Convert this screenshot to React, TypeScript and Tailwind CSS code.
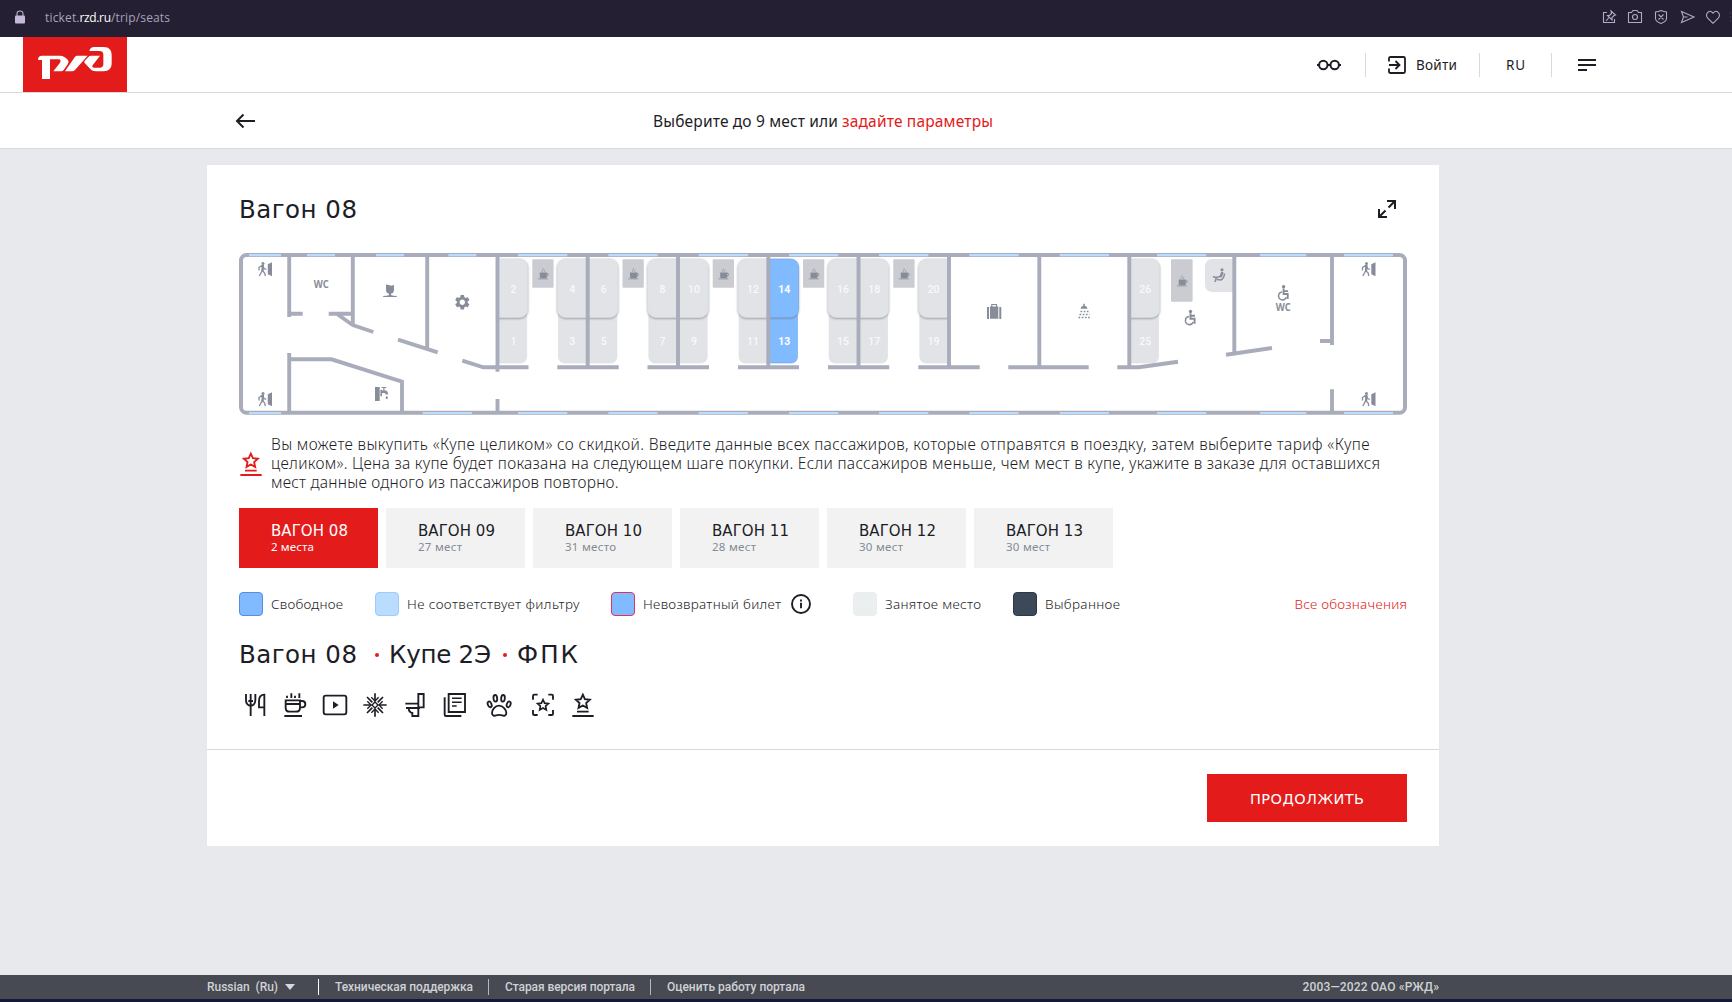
import React, { useLayoutEffect, useRef, useState } from "react";

const sans = "font-['Noto_Sans',sans-serif]";
const wide = "font-['DejaVu_Sans',sans-serif]";

/** One line of text whose tracking is adjusted so that it spans `w` pixels. */
function Fit({ w, className = "", children }: { w: number; className?: string; children: string }) {
  const ref = useRef<HTMLSpanElement>(null);
  const [spacing, setSpacing] = useState(0);
  useLayoutEffect(() => {
    const el = ref.current;
    if (!el) return;
    el.style.letterSpacing = "0px";
    const natural = el.getBoundingClientRect().width;
    const next = (w - natural) / Math.max(1, children.length - 1);
    el.style.letterSpacing = `${next}px`;
    setSpacing(next);
  }, [w, children]);
  return (
    <span ref={ref} className={`inline-block shrink-0 whitespace-pre ${className}`} style={{ letterSpacing: spacing, marginRight: -spacing }}>
      {children}
    </span>
  );
}

function star(cx: number, cy: number, r: number) {
  const pts: string[] = [];
  for (let i = 0; i < 10; i++) {
    const rad = i % 2 ? r * 0.48 : r;
    const a = -Math.PI / 2 + (i * Math.PI) / 5;
    pts.push(`${(cx + rad * Math.cos(a)).toFixed(1)} ${(cy + rad * Math.sin(a)).toFixed(1)}`);
  }
  return `M${pts.join("L")}Z`;
}

const stroke = { fill: "none", stroke: "currentColor", strokeWidth: 5.6 } as const;

function StarBase({ className = "" }: { className?: string }) {
  return (
    <svg className={`h-[26px] w-[26px] shrink-0 ${className}`} viewBox="1021 201 78 78" {...stroke}>
      <path d={star(1059.5, 231, 22)} />
      <path d="M1042 260h35M1028 273h64" />
    </svg>
  );
}

function Services() {
  const cls = "h-[26px] w-[26px] shrink-0";
  return (
    <div className="flex items-center gap-[14px] text-[#1d1d26]">
      <svg className={cls} viewBox="36 201 78 78" {...stroke}>
        <path d="M48 207v19q0 14 14 17q14-3 14-17v-19M62 207v66M55 228h14M103 273v-64q-16 0-16 20v18h16" />
      </svg>
      <svg className={cls} viewBox="156 201 78 78" {...stroke}>
        <path d="M167 226h43v22q0 12-12 12h-19q-12 0-12-12zM210 228h6q10 0 10 9.500t-10 9.500h-6M163 273h53M168 237h42M171 212v7M184 205v14M195 212v7M208 205v14" />
      </svg>
      <svg className={cls} viewBox="276 201 78 78" {...stroke}>
        <rect x="281" y="212" width="68" height="56" rx="6" />
        <path d="M309 229l17 11-17 11z" fill="currentColor" stroke="none" />
      </svg>
      <svg className={cls} viewBox="396 201 78 78" {...stroke} strokeWidth="5">
        <path d="M400 240h24M470 240h-24M435 205v24M435 275v-24M411 216l16 16M459 216l-16 16M411 264l16-16M459 264l-16-16" />
        <path d="M412 229l11 11-11 11M458 229l-11 11 11 11M424 217l11 11 11-11M424 263l11-11 11 11" strokeWidth="4" />
        <path d="M435 231l9 9-9 9-9-9z" fill="white" strokeWidth="4" />
      </svg>
      <svg className={cls} viewBox="518 201 78 78" {...stroke}>
        <path d="M567 207h16v40h-16zM528 236h39M530 249h42M538 250q1 12 11 14v9h18v-24" />
      </svg>
      <svg className={cls} viewBox="637 201 78 78" {...stroke}>
        <path d="M657 207h49v54h-49zM645 217v52q0 4 4 4h46" />
        <path d="M667 220h29M667 232h29M667 243h14" strokeWidth="4.500" />
      </svg>
      <svg className="h-[26px] w-[34px] shrink-0" viewBox="756 201 102 78" {...stroke}>
        <ellipse cx="779" cy="238" rx="5.500" ry="9" transform="rotate(-20 779 238)" />
        <ellipse cx="796" cy="220" rx="5.500" ry="10" transform="rotate(-6 796 220)" />
        <ellipse cx="819" cy="220" rx="5.500" ry="10" transform="rotate(6 819 220)" />
        <ellipse cx="836" cy="238" rx="5.500" ry="9" transform="rotate(20 836 238)" />
        <path d="M807 242c-12 0-21 12-21 22c0 9 8 9 12 7q9-3 19 0c4 2 12 2 12-7c0-10-10-22-22-22z" />
      </svg>
      <svg className={cls} viewBox="900 201 78 78" {...stroke}>
        <path d="M909 224v-11q0-4 4-4h10M955 209h10q4 0 4 4v11M969 255v11q0 4-4 4h-10M923 270h-10q-4 0-4-4v-11" />
        <path d={star(939, 241, 17)} strokeWidth="5" />
      </svg>
      <StarBase />
    </div>
  );
}

type Seat = { n: string; x: number; side: "l" | "r"; upper: boolean; free?: boolean };

const seats: Seat[] = [];
const walls = [497.5, 587.7, 678, 768.3, 858.3, 949];
walls.forEach((wx, i) => {
  const base = i * 4;
  if (i < 5) {
    const free = i === 3;
    seats.push({ n: String(base + 1), x: wx, side: "l", upper: false, free });
    seats.push({ n: String(base + 2), x: wx, side: "l", upper: true, free });
  }
  if (i > 0) {
    seats.push({ n: String(base - 1), x: wx, side: "r", upper: false });
    seats.push({ n: String(base), x: wx, side: "r", upper: true });
  }
});
seats.push({ n: "25", x: 1129.3, side: "l", upper: false });
seats.push({ n: "26", x: 1129.3, side: "l", upper: true });

function SeatShape({ s }: { s: Seat }) {
  const w = s.upper ? 30.2 : 29.2;
  const r = s.upper ? 8 : 6;
  const [top, bottom] = s.upper ? [259, 317.4] : [310, 363];
  const dir = s.side === "l" ? 1 : -1;
  const sweep = s.side === "l" ? 1 : 0;
  const edge = s.x + dir * w;
  const d = `M${s.x} ${top}H${edge - dir * r}A${r} ${r} 0 0 ${sweep} ${edge} ${top + r}V${bottom - r}A${r} ${r} 0 0 ${sweep} ${edge - dir * r} ${bottom}H${s.x}Z`;
  return (
    <g>
      <path
        d={d}
        fill={s.free ? "#80bbff" : "#e1e3e7"}
        stroke={s.free ? "#6ca3f5" : "#dcdee2"}
        strokeWidth=".6"
        filter={s.upper ? "url(#drop)" : undefined}
      />
      <text
        x={s.x + dir * 16 - (dir < 0 ? -0.6 : 0)}
        y={s.upper ? 292.6 : 344.6}
        textAnchor="middle"
        fontSize="10.500"
        fontWeight={s.free ? 700 : 500}
        fill={s.free ? "#fff" : "#f8f9fa"}
        fontFamily="Roboto, sans-serif"
      >
        {s.n}
      </text>
    </g>
  );
}

function Exit({ x, y }: { x: number; y: number }) {
  return (
    <g transform={`translate(${x} ${y})`} fill="#868c98">
      <circle cx="5" cy="1.400" r="1.500" />
      <path d="M4.200 3.200L1 5.600V8.500M4.600 3.200L4.300 8.600L1.300 14M4.300 8.600L6.700 11L7.300 14M5 3.800L6 6.500L8.300 7.300" fill="none" stroke="#868c98" strokeWidth="1.300" />
      <path d="M4 3h2l-.3 6H3.400z" />
      <path d="M9.800 2.300l4.200-2v14l-4.200-2z" />
    </g>
  );
}

function Cup({ x, y }: { x: number; y: number }) {
  return (
    <g transform={`translate(${x} ${y})`} fill="#868c98">
      <path d="M-3.300-1.500h7v4.500q0 1.300-1.300 1.300h-4.400q-1.300 0-1.300-1.300z" />
      <path d="M3.500-.8q1.600 0 1.600 1.400t-1.800 1.400" fill="none" stroke="#868c98" />
      <path d="M-5 4.500H4.700v.8H-5z" />
      <path d="M-.5-2.200q-1.300-1 0-1.900t.6-1.500M1.600-2.200q-1-1 .2-2" fill="none" stroke="#868c98" strokeWidth=".7" />
    </g>
  );
}

function Wheelchair({ x, y }: { x: number; y: number }) {
  return (
    <g transform={`translate(${x} ${y})`} fill="none" stroke="#868c98" strokeWidth="1.900">
      <circle cx="5.300" cy="1.500" r="1.700" fill="#868c98" stroke="none" />
      <path d="M5.300 3.300V8.700H9.400V13.800M5.200 5.800H9.800" />
      <path d="M3.900 6.600A4 4 0 1 0 8 12" strokeWidth="1.500" />
    </g>
  );
}

function CarriageMap() {
  const topWindows = [[249, 32], [307, 28], [376, 28], [448.3, 28], [518, 49.3], [608.3, 49.3], [698.7, 49.3], [789, 49.3], [879, 49.3], [969.3, 49.3], [1059.7, 49.3], [1157, 49.3], [1260, 46.3], [1344, 49]];
  const bottomWindows = [[249, 32], [422.7, 49.3], ...topWindows.slice(4)];
  const tables = [532.3, 622.5, 712.7, 803, 893.3];
  return (
    <svg className="block h-[162px] w-[1168px]" viewBox="239 253 1168 162">
      <defs>
        <filter id="drop" x="-20%" y="-10%" width="140%" height="125%">
          <feDropShadow dx="0" dy="1" stdDeviation="0.900" floodColor="#7b8089" floodOpacity=".75" />
        </filter>
      </defs>
      {seats.map((s) => (
        <SeatShape key={s.n} s={s} />
      ))}
      {tables.map((x) => (
        <g key={x}>
          <rect x={x} y="259.300" width="21.300" height="28.500" rx="1" fill="#caccd2" />
          <Cup x={x + 10.8} y={274} />
        </g>
      ))}
      <rect x="1171" y="259.300" width="21.600" height="42.500" rx="1" fill="#caccd2" />
      <Cup x={1182} y={281} />
      <path d="M1234 259h-22a7 7 0 0 0-7 7v19a7 7 0 0 0 7 7h22z" fill="#e1e3e7" />
      <g fill="none" stroke="#868c98" strokeWidth="1.500">
        <circle cx="1222" cy="269.800" r="1.500" fill="#868c98" stroke="none" />
        <path d="M1221 276.500l-5.500 1-2.500-1M1216.500 277.500l-1.500 4.500M1224.500 273.500q-.5 5-3.500 6.500l-4-.5" />
        <path d="M1222.500 272l-2 5" strokeWidth="2.500" />
      </g>
      <rect x="241" y="255" width="1164" height="157.700" rx="5.500" fill="none" stroke="#a9adbb" strokeWidth="4" />
      <path
        fill="none"
        stroke="#a9adbb"
        strokeWidth="3.900"
        d="M289.200 257V317M291 313.700H302.700M328.700 313.700H353M352.800 257V325M337 314L352.700 325L373.300 332M427.200 257V349M398 339.700L437.700 352.300M462.300 360.700L483.300 367.300H528.500M497.500 257V371.700M497.500 399V412M289.200 353V412M289.200 359.300H331.500L402 381.700V412M587.700 257V367M678 257V367M768.300 257V367M858.500 257V367M949 257V367M1039.300 257V367M1129.300 257V367M1234.300 257V352M1332 257V345M1320 341H1332M1332 389.300V412M557.300 367.300H618.700M647.500 367.300H709M738 367.300H799M828 367.300H889.300M918.300 367.300H979.700M1008.300 367.300H1088.700M1117.300 367.300H1139L1178 361.700M1226 354.700L1272 348"
      />
      {topWindows.map(([x, w]) => (
        <rect key={x} x={x} y="254" width={w} height="2.300" fill="#b9dcff" />
      ))}
      {bottomWindows.map(([x, w]) => (
        <rect key={x} x={x} y="412" width={w} height="2" fill="#b9dcff" />
      ))}
      <Exit x={258} y={262} />
      <Exit x={258} y={392} />
      <Exit x={1361.500} y={262} />
      <Exit x={1361.500} y={392} />
      <g fill="#868c98" fontFamily="Noto Sans, sans-serif" fontWeight="700" fontSize="10" textAnchor="middle">
        <text x="321.300" y="287.800" textLength="15" lengthAdjust="spacingAndGlyphs">WC</text>
        <text x="1283.300" y="311" textLength="15" lengthAdjust="spacingAndGlyphs">WC</text>
      </g>
      <path d="M386 284.500l3 .6 2 .6 3-.6v5.500q-.3 2.500-3 3.200v1.200q2 .9 5.700 1v.9h-13.500v-.9q4-.2 5.800-1v-1.200q-3-.9-3-3.800z" fill="#868c98" />
      <g transform="translate(453.300 293.200) scale(.75)">
        <path
          fill="#868c98"
          d="M19.140 12.940c.04-.3.06-.61.06-.94 0-.32-.02-.64-.07-.94l2.030-1.580a.49.49 0 0 0 .12-.61l-1.920-3.320a.488.488 0 0 0-.59-.22l-2.390.96c-.5-.38-1.030-.7-1.620-.94l-.36-2.540a.484.484 0 0 0-.48-.41h-3.840c-.24 0-.43.17-.47.41l-.36 2.540c-.59.24-1.130.57-1.620.94l-2.390-.96c-.22-.08-.47 0-.59.22L2.740 8.870c-.12.21-.08.47.12.61l2.030 1.580c-.05.3-.09.63-.09.94s.02.64.07.94l-2.030 1.580a.49.49 0 0 0-.12.61l1.920 3.320c.12.22.37.29.59.22l2.390-.96c.5.38 1.030.7 1.620.94l.36 2.540c.05.24.24.41.48.41h3.840c.24 0 .44-.17.47-.41l.36-2.540c.59-.24 1.130-.56 1.620-.94l2.390.96c.22.08.47 0 .59-.22l1.920-3.320c.12-.22.07-.47-.12-.61l-2.010-1.580zM12 15.600c-1.980 0-3.600-1.620-3.600-3.600s1.620-3.600 3.600-3.600 3.600 1.620 3.600 3.600-1.620 3.600-3.600 3.600z"
        />
      </g>
      <g fill="#868c98">
        <path d="M375 387h4.700v14H375zM380.400 389.700h1.600v6.600h-1.600z" />
        <path d="M382 390.500h3.500q2.500.3 2.500 4h-2.300q0-1.500-1.200-1.500H382zM381.500 387h4.800v1h-4.800zM383.300 388h1.200v2.700h-1.200z" />
        <path d="M386.800 395.800l1.200 2q0 1.200-1.200 1.200t-1.200-1.200z" />
      </g>
      <g fill="#868c98">
        <path d="M987 307h2v12h-2zM999.300 307h2v12h-2zM990 306.500h8.300v12.200H990z" />
        <path d="M991.800 307v-2.500h4.700v2.500" fill="none" stroke="#868c98" strokeWidth="1.200" />
      </g>
      <g stroke="#868c98" fill="none">
        <path d="M1083.300 303.700h1.500v2q2.500.3 2.800 3h-7q.2-2.700 2.700-3z" fill="#868c98" stroke="none" />
        <path d="M1080.500 311.500h8M1079.500 314.500h10M1078.500 317.500h12" strokeWidth="1.300" strokeDasharray="1.700 1.500" />
      </g>
      <Wheelchair x={1185.200} y={310} />
      <Wheelchair x={1278.300} y={285.300} />
    </svg>
  );
}

function Logo() {
  return (
    <svg className="h-[55px] w-[104px]" viewBox="69 111 312 165">
      <rect x="69" y="111" width="312" height="165" fill="#e31b1a" />
      <g fill="#fff">
        <path d="M114 180q0-13 12-13h55c8 0 14 5 20 10c6 6 6 10 1 17l-11 16q-3 4-8 4h-23l20-26c4-6 1-10-5-10h-25v59h-24v-57z" />
        <path d="M230 167h33l-38 43q-4 4-9 4h-21l29-42q3-5 6-5z" />
        <path d="M268 153q3-12 14-12h29c16 0 24 9 24 24v25c0 16-9 24-24 24h-23c-9 0-15-4-20-10l-14-15q-3-3 0-6l11-12q4-4 9-4h26l-21 27c-4 6-2 9 4 9h16c7 0 11-3 11-10v-29c0-8-4-11-12-11z" />
      </g>
    </svg>
  );
}

function BrowserBar() {
  return (
    <div className="flex h-[37px] items-center bg-[#251f33] pl-[15px]">
      <svg className="mb-[4px] h-[14px] w-[10px]" viewBox="0 0 10 14">
        <path d="M2 6V3.800Q2 1 5 1t3 2.800V6" fill="none" stroke="#b9aecb" strokeWidth="1.100" />
        <rect y="5.500" width="10" height="8" rx="1" fill="#c4b9d6" />
      </svg>
      <div className="mb-[2px] ml-[20px] flex font-['Open_Sans',sans-serif] text-[12px] leading-[16px] text-[#a9a2ba]">
        <Fit w={34.500}>ticket.</Fit>
        <Fit w={31.500} className="text-white">rzd.ru</Fit>
        <Fit w={59}>/trip/seats</Fit>
      </div>
      <svg className="mb-[3px] ml-auto h-[16px] w-[132px]" viewBox="1600 9 132 16" fill="none" stroke="#b3a9c6" strokeWidth="1.100">
        <path d="M1607 12.500h-3.500v10h11v-3.500M1611 11l4.500 4-1.500.5-2 2v2.500l-4.500-4.500h2l2-2zM1609 17.500l-3 3.500" />
        <path d="M1628.500 12.500h3l1.500-2h4l1.500 2h3v10h-13z" />
        <circle cx="1635" cy="17" r="2.500" />
        <path d="M1661 10.500q3 1.200 5.500 1.500v6.500q0 3-5.500 5q-5.500-2-5.500-5v-6.500q3-.3 5.500-1.500zM1658.500 14.500l5 5M1663.500 14.500l-5 5" />
        <path d="M1681.500 11.500l12.500 5.500-12.500 5.500 2-5.500zM1683.500 17h4" />
        <path d="M1713 23.300l-5.500-5.300q-1.500-2-.8-4q2.800-5 6.300-.8q3.500-4.200 6.300.8q.7 2-.8 4z" />
        <path d="M1730.500 12v2M1730.500 16v2M1730.500 20v2" stroke="#3d354f" />
      </svg>
    </div>
  );
}

function Header() {
  return (
    <header className="flex h-[56px] items-center border-b border-[#d8d9dc] bg-white pr-[136px] pl-[23px] text-[#1d1d26]">
      <Logo />
      <div className="ml-auto flex items-center">
        <svg className="h-[12px] w-[24px]" viewBox="0 0 24 12" fill="none" stroke="currentColor" strokeWidth="2">
          <circle cx="6.300" cy="6" r="4.200" />
          <circle cx="17.700" cy="6" r="4.200" />
          <path d="M0 6h2M10.500 6h3M22 6h2" />
        </svg>
        <i className="ml-[24px] h-[24px] w-px bg-[#d8d9dc]" />
        <svg className="ml-[22px] h-[18px] w-[18px]" viewBox="0 0 18 18" fill="none" stroke="currentColor" strokeWidth="1.800">
          <path d="M1 5.500V2.500Q1 1 2.500 1H15.500Q17 1 17 2.500V15.500Q17 17 15.500 17H2.500Q1 17 1 15.500V12.500M1 9H11M7.500 5L11.500 9L7.500 13" />
        </svg>
        <Fit w={41} className={`ml-[10px] text-[13.5px] leading-[20px] ${sans}`}>Войти</Fit>
        <i className="ml-[22px] h-[24px] w-px bg-[#d8d9dc]" />
        <Fit w={19} className={`ml-[26px] text-[13.5px] leading-[20px] ${sans}`}>RU</Fit>
        <i className="ml-[26px] h-[24px] w-px bg-[#d8d9dc]" />
        <div className="ml-[26px] flex w-[18px] flex-col gap-[3px]">
          <i className="h-[2px] w-[18px] bg-current" />
          <i className="h-[2px] w-[18px] bg-current" />
          <i className="h-[2px] w-[9px] bg-current" />
        </div>
      </div>
    </header>
  );
}

const wagons = [
  ["ВАГОН 08", "2 места", 43],
  ["ВАГОН 09", "27 мест", 44],
  ["ВАГОН 10", "31 место", 51],
  ["ВАГОН 11", "28 мест", 44],
  ["ВАГОН 12", "30 мест", 44],
  ["ВАГОН 13", "30 мест", 44],
] as const;

function Wagons() {
  return (
    <div className="mt-[15px] flex gap-[8px]">
      {wagons.map(([name, places, w], i) => (
        <button key={name} className={`flex h-[60px] w-[139px] flex-col items-start pt-[13px] pl-[32px] ${i === 0 ? "bg-[#e31b1a] text-white" : "bg-[#f2f2f3] text-[#1d1d26]"}`}>
          <Fit w={77} className={`text-[15px] leading-[20px] ${wide}`}>{name}</Fit>
          <Fit w={w} className={`-mt-[1px] text-[11.5px] leading-[13px] ${sans} ${i === 0 ? "" : "text-[#838a94]"}`}>{places}</Fit>
        </button>
      ))}
    </div>
  );
}

function Key({ swatch, w, className = "", children }: { swatch: string; w: number; className?: string; children: string }) {
  return (
    <div className={`flex items-center gap-[8px] ${className}`}>
      <i className={`h-[24px] w-[24px] shrink-0 rounded-[4px] border ${swatch}`} />
      <Fit w={w}>{children}</Fit>
    </div>
  );
}

function Legend() {
  return (
    <div className={`mt-[24px] flex h-[24px] items-center text-[13.5px] leading-[20px] font-light text-[#1d1d26] ${sans}`}>
      <Key w={72} swatch="border-[#5b8ae0] bg-[#80bbff]">Свободное</Key>
      <Key w={172.500} className="ml-[32px]" swatch="border-[#9cccfc] bg-[#b9dcff]">Не соответствует фильтру</Key>
      <Key w={138} className="ml-[31.500px]" swatch="border-[#e0325a] bg-[#80bbff]">Невозвратный билет</Key>
      <svg className="ml-[10px] h-[20px] w-[20px] shrink-0" viewBox="0 0 20 20" fill="none" stroke="currentColor" strokeWidth="1.900">
        <circle cx="10" cy="10" r="9" />
        <path d="M10 8.800v5.400M10 5.500v2" />
      </svg>
      <Key w={96} className="ml-[42px]" swatch="border-[#e9eded] bg-[#ebeff0]">Занятое место</Key>
      <Key w={75} className="ml-[32px]" swatch="border-[#2b3848] bg-[#3b4958]">Выбранное</Key>
      <div className="ml-auto text-[#e31b1a]">
        <Fit w={112.500}>Все обозначения</Fit>
      </div>
    </div>
  );
}

function Note() {
  return (
    <div className="mt-[20px] flex items-center text-[#1d1d26]">
      <StarBase className="mt-[1px] -ml-[1px] text-[#e31b1a]" />
      <div className={`ml-[7px] flex flex-col items-start text-[15.5px] leading-[19.2px] font-light ${sans}`}>
        <Fit w={1098.500}>Вы можете выкупить «Купе целиком» со скидкой. Введите данные всех пассажиров, которые отправятся в поездку, затем выберите тариф «Купе</Fit>
        <Fit w={1109}>целиком». Цена за купе будет показана на следующем шаге покупки. Если пассажиров меньше, чем мест в купе, укажите в заказе для оставшихся</Fit>
        <Fit w={347.500}>мест данные одного из пассажиров повторно.</Fit>
      </div>
    </div>
  );
}

function Footer() {
  const link = "ml-[16px]";
  return (
    <footer className="border-b-[3px] border-[#131a38] bg-[#474a52]">
      <div className="flex h-[24px] w-[1439px] items-center pl-[207px] font-[Roboto,sans-serif] text-[12px] leading-[16px] font-medium text-[#cfd1d5]">
        <Fit w={71}>Russian  (Ru)</Fit>
        <i className="ml-[7px] h-0 w-0 border-x-[5px] border-t-[6px] border-x-transparent border-t-[#d8d9dc]" />
        <i className="ml-[23px] h-[16px] w-px bg-white" />
        <Fit w={138} className={link}>Техническая поддержка</Fit>
        <i className="ml-[15px] h-[16px] w-px bg-[#b5b7bc]" />
        <Fit w={130} className={link}>Старая версия портала</Fit>
        <i className="ml-[15px] h-[16px] w-px bg-[#b5b7bc]" />
        <Fit w={138} className={link}>Оценить работу портала</Fit>
        <div className="ml-auto">
          <Fit w={136.500}>2003—2022 ОАО «РЖД»</Fit>
        </div>
      </div>
    </footer>
  );
}

export default function App() {
  const title = `text-[24.5px] leading-[32px] text-[#1d1d26] ${wide}`;
  return (
    <div className="flex h-[1002px] w-[1732px] flex-col overflow-hidden bg-[#e8e9ed]">
      <BrowserBar />
      <Header />
      <div className="flex h-[56px] items-center border-b border-[#d8d9dc] bg-white pl-[235px] text-[#1d1d26]">
        <svg className="h-[16px] w-[20px]" viewBox="0 0 20 16" fill="none" stroke="currentColor" strokeWidth="2">
          <path d="M2 8H20M8.500 1.500L2 8L8.500 14.500" />
        </svg>
        <div className={`ml-[398px] flex pt-[1px] text-[15.5px] leading-[22px] ${sans}`}>
          <Fit w={185}>Выберите до 9 мест или</Fit>
          <Fit w={151} className="ml-[4px] text-[#e31b1a]">задайте параметры</Fit>
        </div>
      </div>
      <main className="mt-[16px] ml-[207px] flex h-[681px] w-[1232px] flex-col bg-white">
        <section className="flex h-[584px] flex-col px-[32px]">
          <div className="mt-[28px] flex h-[32px] items-center justify-between">
            <Fit w={118} className={`pt-[1px] ${title}`}>Вагон 08</Fit>
            <svg className="mr-[11px] h-[18px] w-[18px] text-[#1d1d26]" viewBox="0 0 18 18" fill="none" stroke="currentColor" strokeWidth="2">
              <path d="M9 1h8v8M17 1l-6.500 6.500M1 9v8h8M1 17l6.500-6.500" />
            </svg>
          </div>
          <div className="mt-[28px]">
            <CarriageMap />
          </div>
          <Note />
          <Wagons />
          <Legend />
          <div className={`mt-[23px] flex items-center ${title}`}>
            <Fit w={118}>Вагон 08</Fit>
            <i className="ml-[18px] h-[4px] w-[4px] rounded-full bg-[#e31b1a]" />
            <Fit w={102} className="ml-[10px]">Купе 2Э</Fit>
            <i className="ml-[12px] h-[4px] w-[4px] rounded-full bg-[#e31b1a]" />
            <Fit w={61} className="ml-[10px]">ФПК</Fit>
          </div>
          <div className="mt-[21px] ml-[3px]">
            <Services />
          </div>
        </section>
        <div className="flex h-[97px] items-center justify-end border-t border-[#d8d9dc] pr-[32px]">
          <button className="flex h-[48px] w-[200px] items-center justify-center bg-[#e31b1a] text-white">
            <Fit w={114} className={`pt-[1px] text-[14.5px] leading-[20px] ${wide}`}>ПРОДОЛЖИТЬ</Fit>
          </button>
        </div>
      </main>
      <div className="mt-auto">
        <Footer />
      </div>
    </div>
  );
}
